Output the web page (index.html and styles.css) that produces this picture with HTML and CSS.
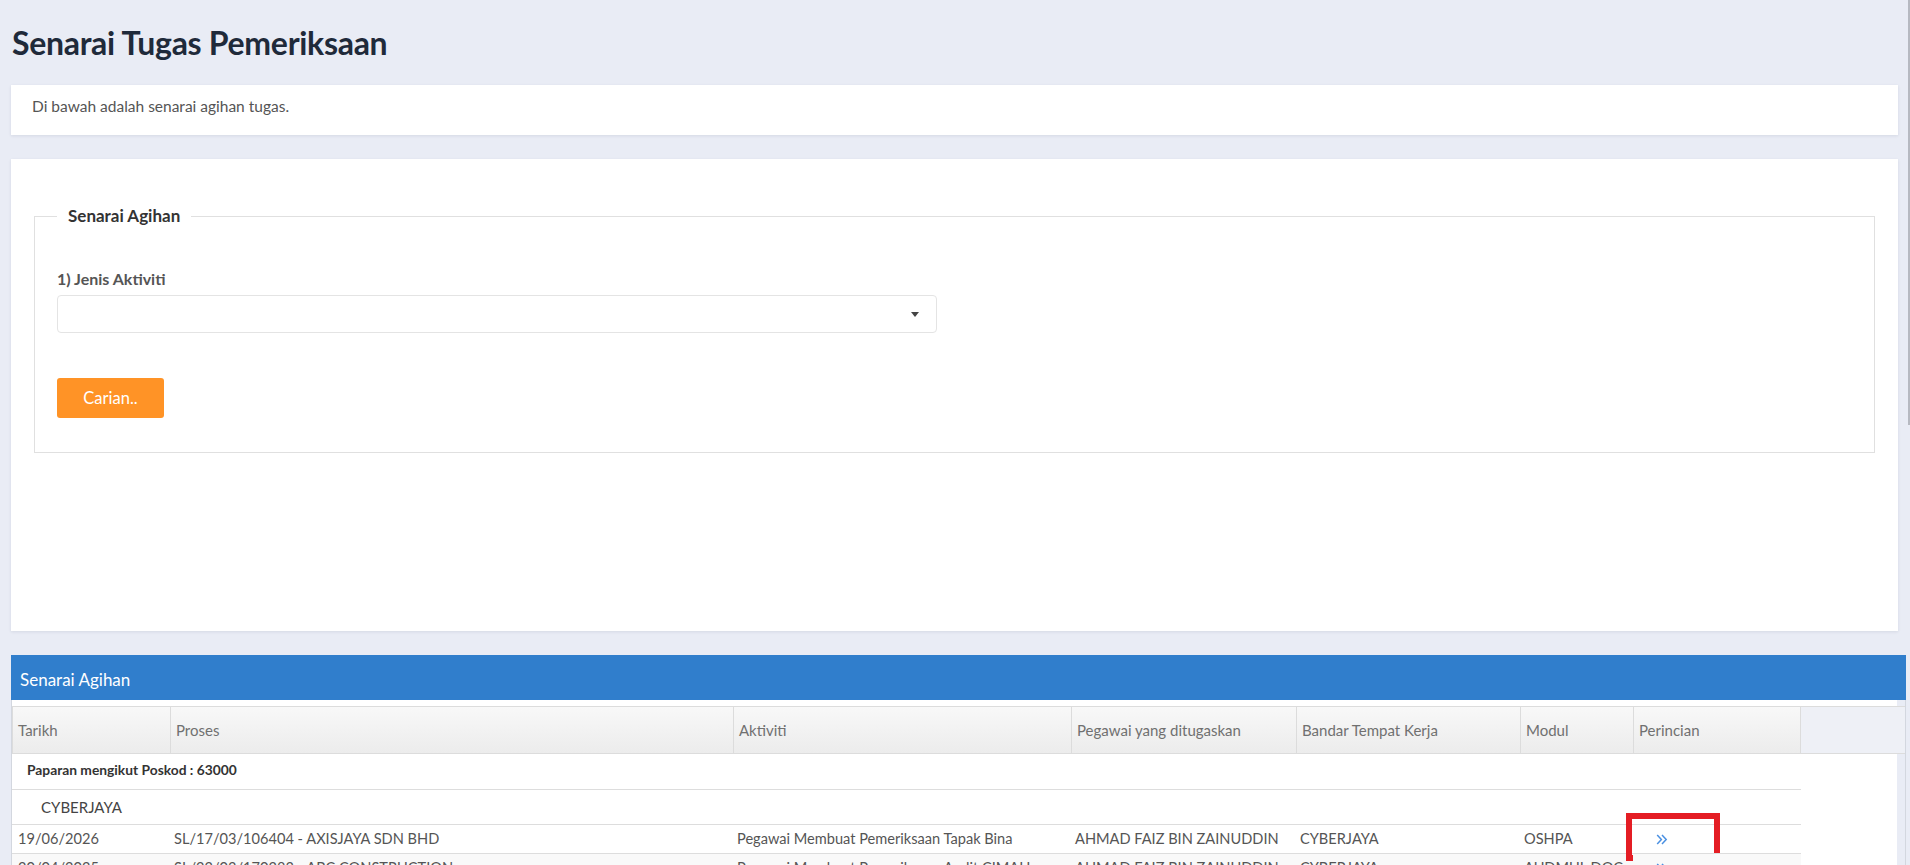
FILE: index.html
```html
<!DOCTYPE html>
<html lang="ms">
<head>
<meta charset="utf-8">
<title>Senarai Tugas Pemeriksaan</title>
<link rel="stylesheet" href="styles.css">
</head>
<body>
<div class="page">
  <h1 class="page-title">Senarai Tugas Pemeriksaan</h1>

  <div class="card intro">
    <p>Di bawah adalah senarai agihan tugas.</p>
  </div>

  <div class="card search">
    <fieldset class="filter">
      <legend>Senarai Agihan</legend>
      <label class="field-label">1) Jenis Aktiviti</label>
      <div class="select-box"><span class="select-value"></span><span class="caret"></span></div>
      <button class="btn-search" type="button">Carian..</button>
    </fieldset>
  </div>

  <div class="panel">
    <div class="panel-head">Senarai Agihan</div>
    <div class="panel-body">
      <div class="head-gap"></div>
      <div class="thead-wrap">
        <table class="grid grid-head">
          <colgroup>
            <col class="c-date"><col class="c-proc"><col class="c-act"><col class="c-off"><col class="c-town"><col class="c-mod"><col class="c-det">
          </colgroup>
          <thead>
            <tr>
              <th>Tarikh</th>
              <th>Proses</th>
              <th>Aktiviti</th>
              <th>Pegawai yang ditugaskan</th>
              <th>Bandar Tempat Kerja</th>
              <th>Modul</th>
              <th class="last">Perincian</th>
            </tr>
          </thead>
        </table>
      </div>
      <div class="tbody-wrap">
        <table class="grid grid-body">
          <colgroup>
            <col class="c-date"><col class="c-proc"><col class="c-act"><col class="c-off"><col class="c-town"><col class="c-mod"><col class="c-det">
          </colgroup>
          <tbody>
            <tr class="group-row">
              <td colspan="7" class="group-title">Paparan mengikut Poskod : 63000</td>
            </tr>
            <tr class="town-row">
              <td colspan="7" class="town-title">CYBERJAYA</td>
            </tr>
            <tr class="data-row">
              <td>19/06/2026</td>
              <td>SL/17/03/106404 - AXISJAYA SDN BHD</td>
              <td>Pegawai Membuat Pemeriksaan Tapak Bina</td>
              <td>AHMAD FAIZ BIN ZAINUDDIN</td>
              <td>CYBERJAYA</td>
              <td>OSHPA</td>
              <td class="detail-cell">
                <a class="detail-link" href="#"><svg width="12" height="11" viewBox="0 0 12 11"><path d="M1.2 1 L5.4 5.5 L1.2 10 M6 1 L10.2 5.5 L6 10" fill="none" stroke="#4a90e2" stroke-width="1.5"/></svg></a>
                <span class="highlight"></span>
              </td>
            </tr>
            <tr class="data-row stripe">
              <td>20/04/2025</td>
              <td>SL/22/03/170283 - ABC CONSTRUCTION</td>
              <td>Pegawai Membuat Pemeriksaan Audit CIMAH</td>
              <td>AHMAD FAIZ BIN ZAINUDDIN</td>
              <td>CYBERJAYA</td>
              <td class="nowrap">AUDMUL DOC</td>
              <td class="detail-cell">
                <a class="detail-link" href="#"><svg width="12" height="11" viewBox="0 0 12 11"><path d="M1.2 1 L5.4 5.5 L1.2 10 M6 1 L10.2 5.5 L6 10" fill="none" stroke="#4a90e2" stroke-width="1.5"/></svg></a>
              </td>
            </tr>
            <tr class="data-row">
              <td>11/03/2025</td>
              <td>SL/19/03/142210 - MEGAJATI SDN BHD</td>
              <td>Pegawai Membuat Pemeriksaan Tapak Bina</td>
              <td>AHMAD FAIZ BIN ZAINUDDIN</td>
              <td>CYBERJAYA</td>
              <td>OSHPA</td>
              <td class="detail-cell">
                <a class="detail-link" href="#"><svg width="12" height="11" viewBox="0 0 12 11"><path d="M1.2 1 L5.4 5.5 L1.2 10 M6 1 L10.2 5.5 L6 10" fill="none" stroke="#4a90e2" stroke-width="1.5"/></svg></a>
              </td>
            </tr>
          </tbody>
        </table>
      </div>
    </div>
  </div>
</div>
<div class="scroll-thumb"></div>
</body>
</html>
```

FILE: styles.css
```css
html {
  scrollbar-width: none;
}

body {
  margin: 0;
  background: #e9ecf5;
  font-family: "Lato", "Liberation Sans", sans-serif;
  color: #555;
}

.page {
  padding: 24px 12px 0 11px;
}

.page-title {
  margin: 0 0 23px 1px;
  font-size: 32px;
  line-height: 38px;
  font-weight: 700;
  letter-spacing: -0.3px;
  color: #1f2a3a;
}

.card {
  background: #fff;
  box-shadow: 0 1px 3px rgba(40, 50, 80, 0.10);
  margin-bottom: 24px;
}

.intro {
  padding: 11px 21px 19px;
  font-size: 15.5px;
  line-height: 20px;
}

.intro p {
  margin: 0;
}

.search {
  padding: 47px 23px 178px;
}

.filter {
  margin: 0;
  min-width: 0;
  border: 1px solid #e0e0e0;
  padding: 0 22px 34px;
  display: flex;
  flex-direction: column;
  align-items: flex-start;
}

.filter legend {
  padding: 0 11px;
  font-size: 17px;
  line-height: 20px;
  font-weight: 700;
  color: #333;
}

.field-label {
  margin-top: 43px;
  font-size: 16px;
  line-height: 20px;
  font-weight: 700;
  color: #555;
}

.select-box {
  margin-top: 6px;
  box-sizing: border-box;
  width: 880px;
  height: 38px;
  border: 1px solid #e4e4e4;
  border-radius: 4px;
  display: flex;
  align-items: center;
  justify-content: space-between;
  padding: 0 17px 0 12px;
}

.caret {
  width: 0;
  height: 0;
  border-left: 4.5px solid transparent;
  border-right: 4.5px solid transparent;
  border-top: 5px solid #444;
}

.btn-search {
  margin-top: 45px;
  width: 107px;
  height: 40px;
  border: 0;
  border-radius: 3px;
  background: #ff9326;
  color: #fff;
  font-family: inherit;
  font-size: 16.5px;
  padding: 0;
}

.panel {
  margin-right: -8px;
  border: 1px solid #d3d7df;
  border-top: 0;
}

.panel-head {
  background: #307ecc;
  color: #fff;
  height: 45px;
  box-sizing: border-box;
  padding: 15px 8px 0 9px;
  font-size: 17px;
  line-height: 20px;
  margin: 0 -1px;
}

.panel-body {
  background: #e9ecf5;
}

.head-gap {
  height: 6px;
  background: #fff;
  margin-right: 8px;
}

.thead-wrap {
  background: #eef0f6;
  border-top: 1px solid #dcdcdc;
  border-bottom: 1px solid #dcdcdc;
}

.tbody-wrap {
  background: #fff;
  margin-right: 8px;
  height: 120px;
  overflow: hidden;
}

.grid {
  table-layout: fixed;
  width: 1789px;
  border-collapse: separate;
  border-spacing: 0;
  font-size: 15px;
  line-height: 20px;
}

.c-date { width: 158px; }
.c-proc { width: 563px; }
.c-act { width: 338px; }
.c-off { width: 225px; }
.c-town { width: 224px; }
.c-mod { width: 113px; }
.c-det { width: 168px; }

.grid-head th {
  text-align: left;
  font-weight: 400;
  color: #707070;
  height: 46px;
  padding: 0 5px;
  border-left: 1px solid #dcdcdc;
  background: linear-gradient(#f8f8f8, #ececec);
  white-space: nowrap;
}

.grid-head th.last {
  border-right: 1px solid #dcdcdc;
}

.grid-body td {
  padding: 4px 5px 4px 4px;
  border-top: 1px solid #dddddd;
  font-size: 14.6px;
  color: #555;
  white-space: nowrap;
  overflow: visible;
}

.grid-body .group-row td {
  border-top: 0;
  padding: 6px 15px 9px;
  font-size: 13.8px;
  font-weight: 700;
  color: #333;
}

.grid-body .town-row td {
  padding: 7px 29px;
  font-size: 15px;
  color: #444;
}

.grid-body td:first-child {
  padding-left: 6px;
}

.grid-body .group-row td.group-title {
  padding-left: 15px;
}

.grid-body .town-row td.town-title {
  padding-left: 29px;
}

.stripe td {
  background: #f9f9f9;
}

.detail-cell {
  position: relative;
}

.grid-body td.detail-cell {
  padding-left: 23px;
}

.detail-link {
  display: inline-flex;
  vertical-align: -1px;
}

.highlight {
  position: absolute;
  left: -7px;
  top: -12px;
  width: 94px;
  height: 48px;
  box-sizing: border-box;
  border: 6px solid #e41d24;
  pointer-events: none;
}

.scroll-thumb {
  position: fixed;
  top: 0;
  right: 0;
  width: 2px;
  height: 425px;
  background: #b6b9c1;
}
```
